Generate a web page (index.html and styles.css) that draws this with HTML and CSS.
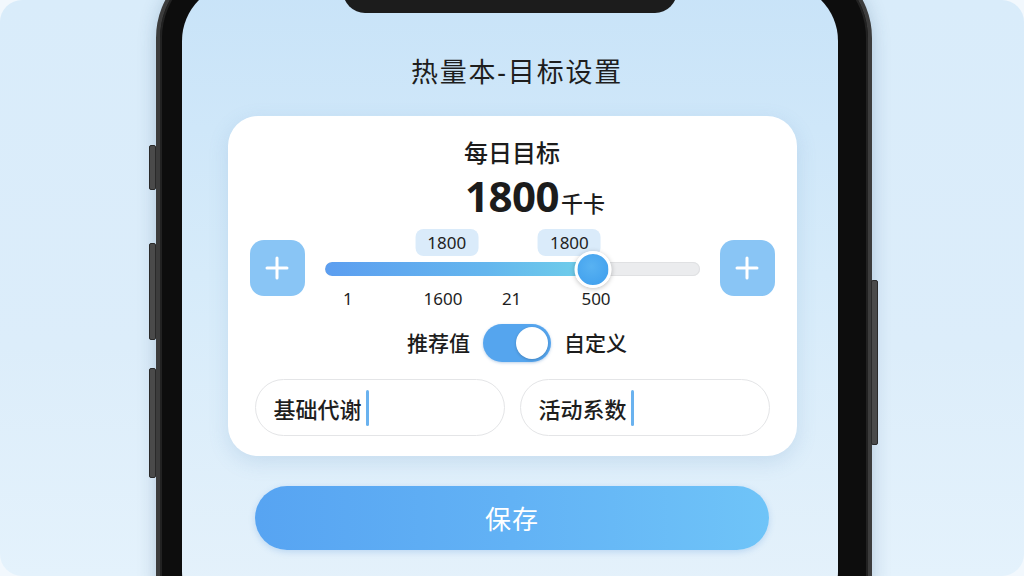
FILE: index.html
```html
<!DOCTYPE html>
<html lang="zh-CN">

<head>
  <meta charset="UTF-8">
  <meta name="viewport" content="width=device-width, initial-scale=1">
  <title>热量本-目标设置</title>
  <link rel="stylesheet" href="styles.css">
</head>

<body>
  <div class="backdrop">
    <div class="phone">
      <span class="side-btn left b1"></span>
      <span class="side-btn left b2"></span>
      <span class="side-btn left b3"></span>
      <span class="side-btn right b4"></span>

      <div class="screen">
        <div class="notch"></div>

        <h1 class="title">热量本-目标设置</h1>

        <div class="card">
          <p class="label">每日目标</p>
          <p class="goal"><span class="num">1800</span><span class="unit">千卡</span></p>

          <div class="slider-row">
            <button class="step">
              <svg width="26" height="26" viewBox="0 0 26 26"><path d="M13 3v20M3 13h20" stroke="#fff" stroke-width="3" stroke-linecap="round"/></svg>
            </button>

            <div class="slider">
              <div class="bubbles">
                <span class="bubble" style="left: 32.6%">1800</span>
                <span class="bubble" style="left: 65.3%">1800</span>
              </div>
              <div class="track-wrap">
                <div class="track">
                  <div class="fill" style="width: 71.5%"></div>
                </div>
                <span class="thumb" style="left: 71.5%"></span>
              </div>
              <div class="ticks">
                <span style="left: 6.2%">1</span>
                <span style="left: 31.6%">1600</span>
                <span style="left: 49.9%">21</span>
                <span style="left: 72.4%">500</span>
              </div>
            </div>

            <button class="step">
              <svg width="26" height="26" viewBox="0 0 26 26"><path d="M13 3v20M3 13h20" stroke="#fff" stroke-width="3" stroke-linecap="round"/></svg>
            </button>
          </div>

          <div class="mode-row">
            <span>推荐值</span>
            <span class="switch"><span class="knob"></span></span>
            <span>自定义</span>
          </div>

          <div class="inputs">
            <div class="field">基础代谢<span class="caret"></span></div>
            <div class="field">活动系数<span class="caret"></span></div>
          </div>
        </div>

        <button class="save">保存</button>
      </div>
    </div>
  </div>
</body>

</html>
```

FILE: styles.css
```css
* {
  box-sizing: border-box;
  margin: 0;
  padding: 0;
}

body {
  width: 1024px;
  height: 576px;
  overflow: hidden;
  background: #f2f8fd;
  font-family: "Noto Sans", "Noto Sans CJK SC", sans-serif;
  color: #1c1c1c;
}

.backdrop {
  height: 576px;
  border-radius: 22px;
  background: linear-gradient(180deg, #d9ecfa 0%, #dcedfa 60%, #e4f2fc 100%);
  display: flex;
  justify-content: center;
  overflow: hidden;
}

/* phone frame */
.phone {
  position: relative;
  width: 716px;
  height: 700px;
  margin-top: -44px;
  margin-left: 3px;
  padding: 23px 30px 23px 22px;
  background: #0d0d0d;
  border: 4px solid #3c3c3c;
  border-radius: 82px;
  box-shadow: inset 0 0 0 2px #222, 0 4px 18px rgba(40, 80, 120, 0.25);
}

.side-btn {
  position: absolute;
  width: 7px;
  background: #4a4a4a;
  border: 1px solid #2a2a2a;
  border-radius: 2px;
}

.side-btn.left { left: -11px; }
.side-btn.right { right: -10px; }
.b1 { top: 185px; height: 45px; }
.b2 { top: 283px; height: 97px; }
.b3 { top: 408px; height: 110px; }
.b4 { top: 320px; height: 165px; }

.screen {
  position: relative;
  height: 100%;
  border-radius: 58px;
  background: linear-gradient(180deg, #c8e3f8 0%, #d6ebfa 45%, #e6f2fb 100%);
  padding: 71px 0 0 5px;
  display: flex;
  flex-direction: column;
  align-items: center;
  overflow: hidden;
}

.notch {
  position: absolute;
  top: 0;
  left: 50%;
  transform: translateX(-50%);
  width: 334px;
  height: 30px;
  background: #1c1c1c;
  border-radius: 0 0 22px 22px;
}

.title {
  padding-left: 10px;
  font-size: 27px;
  font-weight: 400;
  line-height: 36px;
  letter-spacing: 1.8px;
  color: #1e1e1e;
}

/* goal card */
.card {
  width: 569px;
  margin-top: 26px;
  padding: 22px 22px 20px;
  background: #fff;
  border-radius: 30px;
  box-shadow: 0 6px 20px rgba(90, 140, 190, 0.18);
}

.label {
  text-align: center;
  font-size: 24px;
  line-height: 30px;
  font-weight: 500;
}

.goal {
  height: 48px;
  margin-top: 4px;
  padding-left: 46px;
  display: flex;
  justify-content: center;
  align-items: baseline;
  line-height: 48px;
}

.goal .num {
  font-size: 42px;
  font-weight: 700;
  letter-spacing: -0.5px;
}

.goal .unit {
  font-size: 22px;
  font-weight: 500;
  margin-left: 2px;
}

.slider-row {
  display: flex;
  align-items: flex-start;
  gap: 20px;
  margin-top: 9px;
}

.step {
  width: 55px;
  height: 56px;
  margin-top: 11px;
  border: none;
  border-radius: 14px;
  background: #89c5f5;
  display: flex;
  align-items: center;
  justify-content: center;
  flex-shrink: 0;
}

.slider {
  flex: 1;
}

.bubbles,
.ticks {
  position: relative;
  height: 27px;
}

.bubble {
  position: absolute;
  top: 0;
  transform: translateX(-50%);
  padding: 0 12px;
  height: 27px;
  line-height: 27px;
  font-size: 17px;
  background: #daebfa;
  border-radius: 8px;
  color: #222;
}

.track-wrap {
  position: relative;
  height: 36px;
  margin-top: -5px;
  display: flex;
  align-items: center;
}

.track {
  width: 100%;
  height: 14px;
  border-radius: 7px;
  background: #ebecee;
  box-shadow: inset 0 0 0 1px #e0e1e3;
  overflow: hidden;
}

.fill {
  height: 100%;
  border-radius: 7px;
  background: linear-gradient(90deg, #5c9ef0 0%, #64b6ee 60%, #70d0ea 100%);
}

.thumb {
  position: absolute;
  top: 0;
  width: 37px;
  height: 37px;
  transform: translateX(-50%);
  border-radius: 50%;
  background: radial-gradient(circle at 45% 40%, #58b2f2, #3d9ded);
  border: 3px solid #fff;
  box-shadow: 0 1px 5px rgba(0, 0, 0, 0.25);
}

.ticks {
  margin-top: 1px;
  height: 22px;
}

.ticks span {
  position: absolute;
  top: 0;
  transform: translateX(-50%);
  font-size: 17px;
  line-height: 22px;
  color: #1e1e1e;
}

.mode-row {
  display: flex;
  justify-content: center;
  align-items: center;
  gap: 13px;
  margin-top: 14px;
  padding-left: 10px;
  font-size: 21px;
  font-weight: 500;
  line-height: 38px;
}

.switch {
  position: relative;
  width: 68px;
  height: 38px;
  border-radius: 19px;
  background: #55a5ee;
  box-shadow: 0 1px 3px rgba(60, 120, 190, 0.35);
}

.knob {
  position: absolute;
  top: 3px;
  right: 3px;
  width: 32px;
  height: 32px;
  border-radius: 50%;
  background: #fff;
  box-shadow: 0 1px 3px rgba(0, 0, 0, 0.2);
}

.inputs {
  display: flex;
  gap: 15px;
  margin: 17px 5px 0;
}

.field {
  flex: 1;
  height: 57px;
  padding-left: 18px;
  display: flex;
  align-items: center;
  border: 1.5px solid #e4e5e7;
  border-radius: 29px;
  font-size: 22px;
  font-weight: 500;
  color: #1e1e1e;
}

.caret {
  width: 3px;
  height: 36px;
  margin-left: 4px;
  border-radius: 2px;
  background: #6ab2ef;
}

.save {
  width: 514px;
  height: 64px;
  margin-top: 30px;
  border: none;
  border-radius: 32px;
  background: linear-gradient(90deg, #57a4f2 0%, #62b2f5 50%, #6fc4f8 100%);
  box-shadow: 0 2px 6px rgba(70, 140, 220, 0.25);
  color: #fff;
  font-family: inherit;
  font-size: 26px;
  letter-spacing: 1px;
}
```
